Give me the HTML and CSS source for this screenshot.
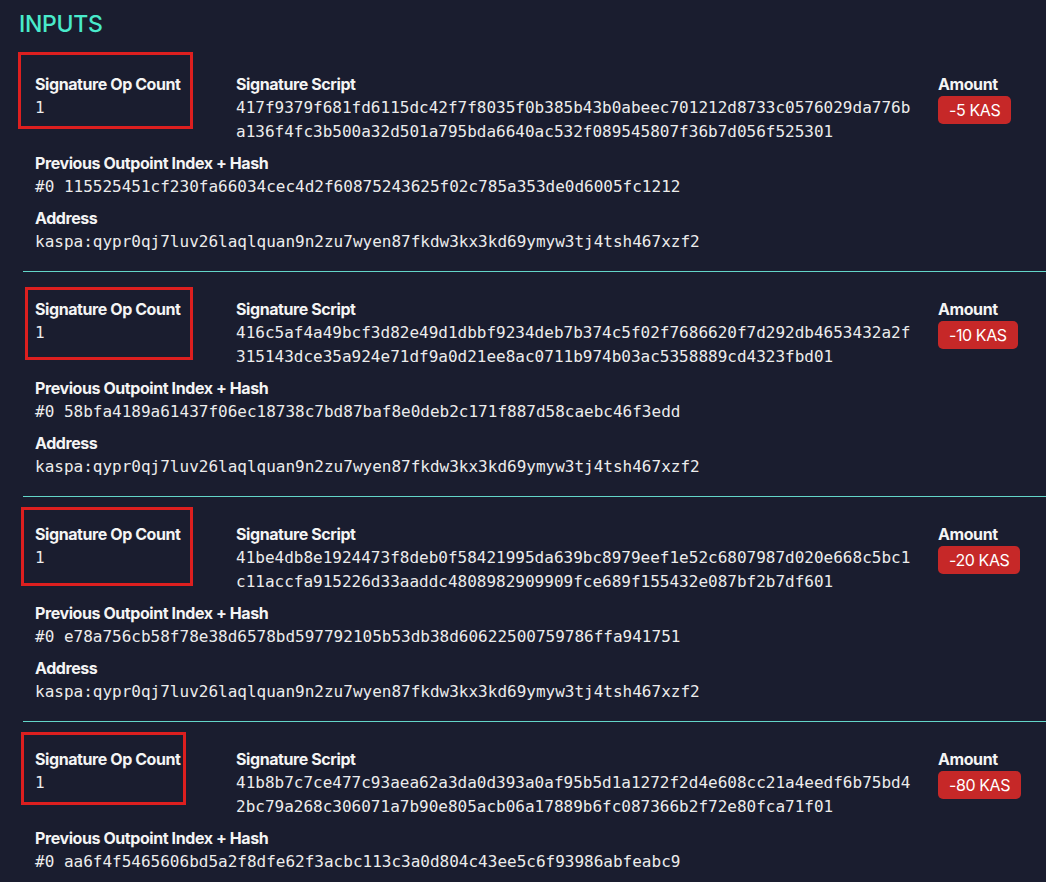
FILE: index.html
```html
<!DOCTYPE html>
<html>
<head>
<meta charset="utf-8">
<link rel="stylesheet" href="styles.css">
</head>
<body>
<div class="page">
  <h2 class="title">INPUTS</h2>

  <div class="input">
    <div class="mark" style="left:-5px;top:5px;width:175px;height:77px"></div>
    <div class="field sigop"><div class="label">Signature Op Count</div><div class="value">1</div></div>
    <div class="field script"><div class="label">Signature Script</div><div class="value">417f9379f681fd6115dc42f7f8035f0b385b43b0abeec701212d8733c0576029da776ba136f4fc3b500a32d501a795bda6640ac532f089545807f36b7d056f525301</div></div>
    <div class="field amount"><div class="label">Amount</div><span class="badge">-5 KAS</span></div>
    <div class="field wide"><div class="label">Previous Outpoint Index + Hash</div><div class="value">#0 115525451cf230fa66034cec4d2f60875243625f02c785a353de0d6005fc1212</div></div>
    <div class="field wide"><div class="label">Address</div><div class="value">kaspa:qypr0qj7luv26laqlquan9n2zu7wyen87fkdw3kx3kd69ymyw3tj4tsh467xzf2</div></div>
  </div>

  <div class="input">
    <div class="mark" style="left:2px;top:15px;width:168px;height:73px"></div>
    <div class="field sigop"><div class="label">Signature Op Count</div><div class="value">1</div></div>
    <div class="field script"><div class="label">Signature Script</div><div class="value">416c5af4a49bcf3d82e49d1dbbf9234deb7b374c5f02f7686620f7d292db4653432a2f315143dce35a924e71df9a0d21ee8ac0711b974b03ac5358889cd4323fbd01</div></div>
    <div class="field amount"><div class="label">Amount</div><span class="badge">-10 KAS</span></div>
    <div class="field wide"><div class="label">Previous Outpoint Index + Hash</div><div class="value">#0 58bfa4189a61437f06ec18738c7bd87baf8e0deb2c171f887d58caebc46f3edd</div></div>
    <div class="field wide"><div class="label">Address</div><div class="value">kaspa:qypr0qj7luv26laqlquan9n2zu7wyen87fkdw3kx3kd69ymyw3tj4tsh467xzf2</div></div>
  </div>

  <div class="input">
    <div class="mark" style="left:-2px;top:10px;width:172px;height:79px"></div>
    <div class="field sigop"><div class="label">Signature Op Count</div><div class="value">1</div></div>
    <div class="field script"><div class="label">Signature Script</div><div class="value">41be4db8e1924473f8deb0f58421995da639bc8979eef1e52c6807987d020e668c5bc1c11accfa915226d33aaddc4808982909909fce689f155432e087bf2b7df601</div></div>
    <div class="field amount"><div class="label">Amount</div><span class="badge">-20 KAS</span></div>
    <div class="field wide"><div class="label">Previous Outpoint Index + Hash</div><div class="value">#0 e78a756cb58f78e38d6578bd597792105b53db38d60622500759786ffa941751</div></div>
    <div class="field wide"><div class="label">Address</div><div class="value">kaspa:qypr0qj7luv26laqlquan9n2zu7wyen87fkdw3kx3kd69ymyw3tj4tsh467xzf2</div></div>
  </div>

  <div class="input">
    <div class="mark" style="left:-2px;top:10px;width:165px;height:73px"></div>
    <div class="field sigop"><div class="label">Signature Op Count</div><div class="value">1</div></div>
    <div class="field script"><div class="label">Signature Script</div><div class="value">41b8b7c7ce477c93aea62a3da0d393a0af95b5d1a1272f2d4e608cc21a4eedf6b75bd42bc79a268c306071a7b90e805acb06a17889b6fc087366b2f72e80fca71f01</div></div>
    <div class="field amount"><div class="label">Amount</div><span class="badge">-80 KAS</span></div>
    <div class="field wide"><div class="label">Previous Outpoint Index + Hash</div><div class="value">#0 aa6f4f5465606bd5a2f8dfe62f3acbc113c3a0d804c43ee5c6f93986abfeabc9</div></div>
  </div>
</div>
</body>
</html>
```

FILE: styles.css
```css
html, body {
  margin: 0;
  padding: 0;
  background: #1a1d2f;
  overflow: hidden;
}
.page {
  padding: 8px 0 0 19px;
  font-family: Inter, "Liberation Sans", sans-serif;
  color: #f2f2f2;
}
.title {
  margin: 0 0 7px 0;
  font-size: 23px;
  line-height: 32px;
  font-weight: 500;
  color: #49eacb;
  letter-spacing: -0.3px;
}
.input {
  position: relative;
  margin-left: 4px;
  padding: 25px 0 17px 12px;
  border-bottom: 1px solid #63d6c9;
  display: grid;
  grid-template-columns: 201px 702px 1fr;
  row-gap: 7px;
}
.field.wide {
  grid-column: 1 / -1;
}
.label {
  font-size: 16px;
  line-height: 24px;
  font-weight: 700;
  letter-spacing: -0.42px;
  color: #f4f4f4;
}
.value {
  font-family: "DejaVu Sans Mono", "Liberation Mono", monospace;
  font-size: 16px;
  line-height: 24px;
  color: #ececec;
}
.script .value {
  width: 678px;
  word-break: break-all;
}
.badge {
  display: inline-block;
  background: #c62828;
  color: #fff;
  font-size: 16px;
  line-height: 28px;
  padding: 0 11px;
  border-radius: 5px;
  letter-spacing: -0.4px;
}
.mark {
  position: absolute;
  box-sizing: border-box;
  border: 3px solid #dd1f1f;
}
```
